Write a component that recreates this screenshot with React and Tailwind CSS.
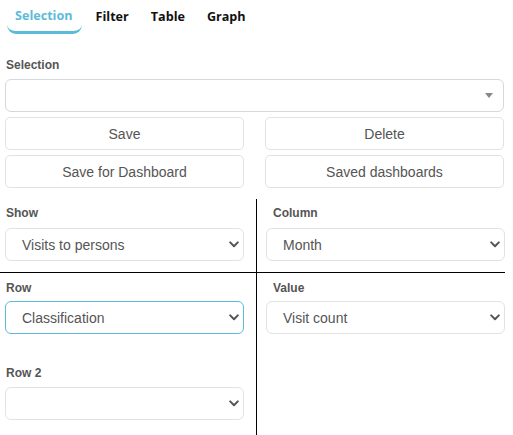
import React from "react";

const Chevron = () => (
  <svg width="10" height="7" viewBox="0 0 10 7" className="shrink-0">
    <path d="M1.2 1.4 L5 5.2 L8.8 1.4" fill="none" stroke="#555" strokeWidth="2" strokeLinecap="round" strokeLinejoin="round" />
  </svg>
);

const SelectBox = ({ value, active, w }) => (
  <div
    className={`flex h-[33px] items-center justify-between rounded-[6px] border bg-white pl-[16px] pr-[4px] pt-[2px] text-[14px] text-[#555] ${
      active ? "border-[#5bbcd9]" : "border-[#e2e2e2]"
    } ${w}`}
  >
    <span>{value}</span>
    <span className="-mt-[2px] flex">
      <Chevron />
    </span>
  </div>
);

const Label = ({ children, cls }) => (
  <div className={`h-[16px] pt-[1px] text-[12px] font-bold leading-[16px] text-[#555] ${cls}`}>{children}</div>
);

const Btn = ({ children }) => (
  <div className="flex h-[33px] items-center justify-center rounded-[5px] border border-[#e2e2e2] bg-white pt-[2px] text-[14px] text-[#555]">
    {children}
  </div>
);

export default function App() {
  return (
    <div className="h-[435px] w-[513px] overflow-hidden bg-white font-['Liberation_Sans',Arial,sans-serif]">
      {/* Tabs */}
      <div className="flex h-[35px] gap-[6px] pl-[7px] font-['Open_Sans',sans-serif] text-[12.6px] font-bold">
        <div className="flex h-[34px] items-center rounded-b-[9px] border-b-[3px] border-[#5bbcd9] pl-[8px] pr-[9px] pt-[2px] text-[#5bbcd9]">
          Selection
        </div>
        <div className="flex h-[34px] items-center px-[8px] pt-[1px] text-[#111]">Filter</div>
        <div className="flex h-[34px] items-center px-[8px] pt-[1px] text-[#111]">Table</div>
        <div className="flex h-[34px] items-center px-[8px] pt-[1px] text-[#111]">Graph</div>
      </div>

      {/* Selection section */}
      <div className="w-[504px] pl-[5px] pt-[21px]">
        <Label cls="mb-[7px] pl-[1px]">Selection</Label>
        <div className="flex h-[33px] items-center justify-end rounded-[6px] border border-[#d3d7de] bg-white pr-[10px]">
          <svg width="8" height="5" viewBox="0 0 8 5">
            <path d="M0 0 L8 0 L4 5 Z" fill="#888" />
          </svg>
        </div>
        <div className="mt-[5px] grid grid-cols-[239px_239px] gap-x-[21px] gap-y-[5px]">
          <Btn>Save</Btn>
          <Btn>Delete</Btn>
          <Btn>Save for Dashboard</Btn>
          <Btn>Saved dashboards</Btn>
        </div>
      </div>

      {/* Lower grid */}
      <div className="mt-[11px] w-[505px]">
        <div className="flex h-[74px] border-b border-black">
          <div className="w-[257px] border-r border-black pl-[5px] pt-[5px]">
            <Label cls="mb-[8px] pl-[1px]">Show</Label>
            <SelectBox value="Visits to persons" w="w-[239px]" />
          </div>
          <div className="flex-1 pl-[9px] pt-[5px]">
            <Label cls="mb-[8px] pl-[7px]">Column</Label>
            <SelectBox value="Month" w="w-[239px]" />
          </div>
        </div>
        <div className="flex h-[200px]">
          <div className="w-[257px] border-r border-black pl-[5px] pt-[6px]">
            <Label cls="mb-[6px] pl-[1px]">Row</Label>
            <SelectBox value="Classification" active w="w-[239px]" />
            <Label cls="mb-[7px] mt-[30px] pl-[1px]">Row 2</Label>
            <SelectBox value="" w="w-[239px]" />
          </div>
          <div className="flex-1 pl-[9px] pt-[6px]">
            <Label cls="mb-[6px] pl-[7px]">Value</Label>
            <SelectBox value="Visit count" w="w-[239px]" />
          </div>
        </div>
      </div>
    </div>
  );
}
